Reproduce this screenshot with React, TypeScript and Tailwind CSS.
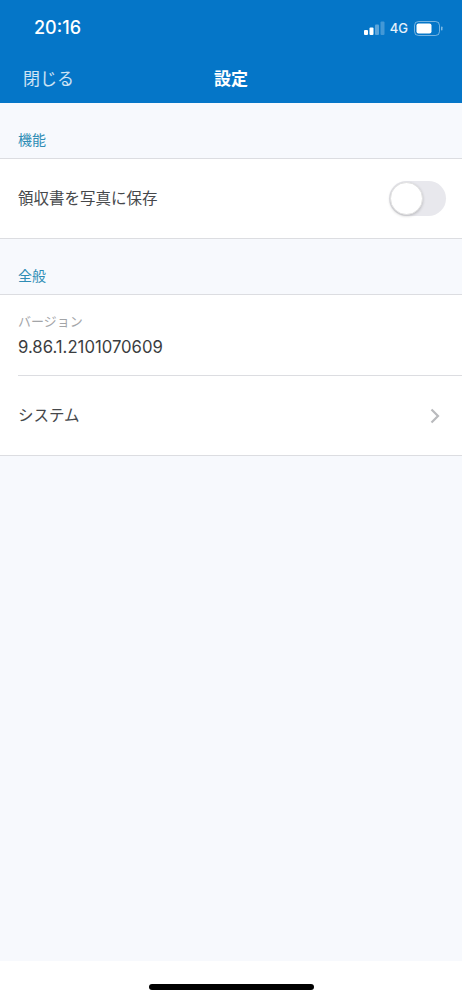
const font = "[font-family:'Inter','Noto_Sans_CJK_JP',sans-serif]";

const StatusBar = () => (
  <div className="flex h-[54px] items-center justify-between pl-[34px] pr-[19px] pt-[2px]">
    <span className="text-[18px] font-medium leading-none text-white">20:16</span>
    <div className="flex items-center">
      {/* signal bars */}
      <svg width="21" height="14" viewBox="0 0 21 14" className="mr-[5px]">
        <rect x="0" y="9" width="4" height="5" rx="1" fill="#ffffff" />
        <rect x="5.5" y="6.5" width="4" height="7.5" rx="1" fill="#ffffff" />
        <rect x="11" y="3.5" width="4" height="10.5" rx="1" fill="#ffffff" fillOpacity="0.35" />
        <rect x="16.5" y="0.5" width="4" height="13.5" rx="1" fill="#ffffff" fillOpacity="0.25" />
      </svg>
      <span className="mr-[6px] text-[13px] font-medium leading-none text-white/90">4G</span>
      {/* battery */}
      <svg width="29" height="15" viewBox="0 0 29 15">
        <rect x="0.5" y="0.5" width="25" height="14" rx="4" fill="none" stroke="#ffffff" strokeOpacity="0.45" />
        <rect x="2.5" y="2.5" width="15" height="10" rx="2" fill="#ffffff" />
        <rect x="27" y="5.5" width="1.5" height="4" rx="0.75" fill="#ffffff" fillOpacity="0.5" />
      </svg>
    </div>
  </div>
);

const SectionLabel = ({ children }: { children: string }) => (
  <div className="flex h-[55px] items-end pb-[8px] pl-[18px] text-[14px] leading-[20px] text-[#2f8db5]">
    {children}
  </div>
);

export default function App() {
  return (
    <div className={`flex h-[999px] w-[462px] flex-col overflow-hidden bg-[#f7f9fd] ${font}`}>
      <header className="h-[103px] shrink-0 bg-[#0576c8]">
        <StatusBar />
        <div className="relative flex h-[49px] items-center justify-center">
          <button className="absolute left-[23px] top-[13px] text-[17px] leading-[24px] text-white/80">閉じる</button>
          <h1 className="text-[17px] font-bold leading-[24px] text-white">設定</h1>
        </div>
      </header>

      <main className="flex-1">
        <SectionLabel>機能</SectionLabel>
        <section className="flex h-[81px] items-center justify-between border-y border-[#dcdde1] bg-white pl-[18px] pr-[16px]">
          <span className="text-[15.5px] text-[#46484b]">領収書を写真に保存</span>
          {/* toggle, off */}
          <div className="flex h-[35px] w-[57px] items-center rounded-full bg-[#e8e8ed] pl-[1px]">
            <div className="h-[33px] w-[33px] rounded-full border border-[#e2e2e2] bg-white shadow-[0_1px_3px_rgba(0,0,0,0.2)]" />
          </div>
        </section>

        <SectionLabel>全般</SectionLabel>
        <section className="border-y border-[#dcdde1] bg-white pl-[18px]">
          <div className="flex h-[81px] flex-col border-b border-[#dcdde1] pt-[18px]">
            <span className="text-[13px] leading-[17px] text-[#a3a5a8]">バージョン</span>
            <span className="mt-[5px] text-[16.7px] leading-[24px] text-[#3b3d40]">9.86.1.2101070609</span>
          </div>
          <div className="flex h-[79px] items-center justify-between pr-[22px]">
            <span className="text-[15.5px] text-[#46484b]">システム</span>
            <svg width="10" height="16" viewBox="0 0 10 16" fill="none">
              <path d="M1.5 1.5 8 8l-6.5 6.5" stroke="#b9babd" strokeWidth="2.2" />
            </svg>
          </div>
        </section>
      </main>

      <footer className="flex h-[38px] shrink-0 items-start justify-center bg-white pt-[23px]">
        <div className="h-[6px] w-[165px] rounded-full bg-black" />
      </footer>
    </div>
  );
}
